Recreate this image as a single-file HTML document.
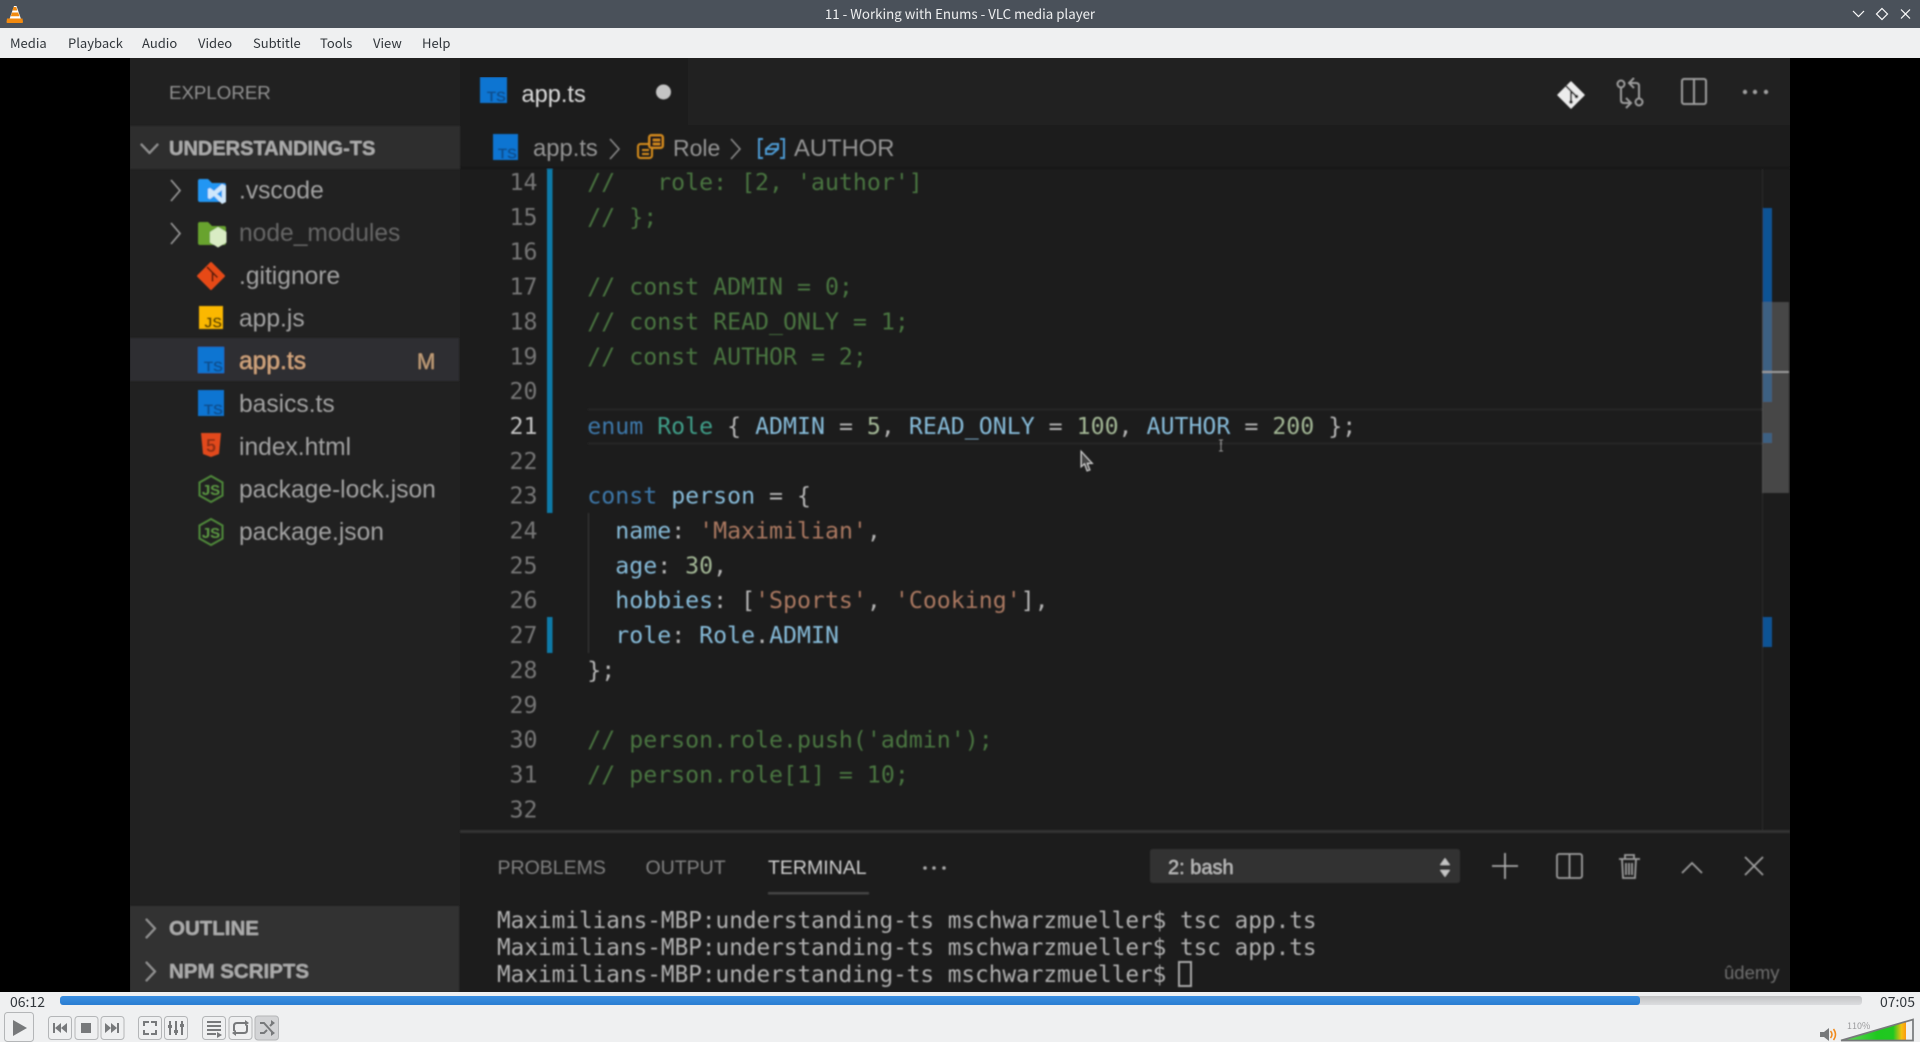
<!DOCTYPE html>
<html><head><meta charset="utf-8"><title>11 - Working with Enums - VLC media player</title>
<style>
html,body{margin:0;padding:0;background:#000;width:1920px;height:1042px;overflow:hidden}
svg{position:absolute;left:0;top:0;display:block}
text{white-space:pre}
.ui{font-family:"Noto Sans CJK JP","Liberation Sans",sans-serif;font-size:13px;fill:#31363b}
.s{font-family:"Liberation Sans",sans-serif}
.f{font-size:24.6px;fill:#a2a2a2}
.b{font-weight:bold;fill:#adadad}
.m{font-family:"DejaVu Sans Mono",monospace;font-size:23.22px}
.n{fill:#767676;text-anchor:end}
.c{fill:#4a7540}.k{fill:#3c78aa}.y{fill:#3f9f89}.v{fill:#86bbd9}.d{fill:#a3b795}.r{fill:#aa7861}.p{fill:#b5b5b5}
.l{fill:none;stroke:#989898;stroke-width:1.700}
.btn{fill:#eff0f1;stroke:#b4b6b8;stroke-width:1}
.ic{fill:#77797b}
.tst{font-family:"Liberation Sans",sans-serif;font-size:15px;font-weight:bold;fill:#0a4f90;text-anchor:end}
</style></head><body>
<svg width="1920" height="1042" viewBox="0 0 1920 1042" xmlns="http://www.w3.org/2000/svg">
<defs>
<filter id="bl" x="0" y="0" width="100%" height="100%"><feGaussianBlur stdDeviation="0.75"/></filter>
<linearGradient id="vol" x1="0" x2="1" y1="0" y2="0"><stop offset="0" stop-color="#66d45c"/><stop offset=".55" stop-color="#1fc81f"/><stop offset=".8" stop-color="#20c820"/><stop offset=".93" stop-color="#f5c010"/><stop offset="1" stop-color="#fb9a10"/></linearGradient>
<linearGradient id="trk" x1="0" x2="0" y1="0" y2="1"><stop offset="0" stop-color="#c2c3c5"/><stop offset="1" stop-color="#dcdde0"/></linearGradient>
<linearGradient id="blu" x1="0" x2="0" y1="0" y2="1"><stop offset="0" stop-color="#3a8ee0"/><stop offset="1" stop-color="#2a7dd2"/></linearGradient>
</defs>

<!-- video background -->
<rect width="1920" height="1042" fill="#000"/>
<rect x="130" y="58" width="330" height="934" fill="#212121"/>
<rect x="460" y="58" width="1330" height="934" fill="#1c1c1c"/>
<rect x="688" y="58" width="1102" height="67" fill="#212121"/>
<g filter="url(#bl)">
<rect x="130" y="126" width="330" height="43" fill="#2e2e2e"/>
<rect x="130" y="906" width="329" height="86" fill="#303030"/>
<rect x="130" y="338" width="329" height="43" fill="#2f2f33"/>
<rect x="460" y="167" width="1330" height="2" fill="#171717"/>

<!-- sidebar -->
<text class="s" x="169" y="99" font-size="18.7" fill="#929292">EXPLORER</text>
<path class="l" d="M141 144l8.500 9 8.500-9"/>
<text class="s b" x="169" y="155" font-size="20">UNDERSTANDING-TS</text>

<path class="l" d="M171 180l9 10.500-9 10.500"/>
<path class="l" d="M171 223l9 10.500-9 10.500"/>
<!-- vscode folder -->
<path d="M198 181a2 2 0 0 1 2-2h8l4 4h12a2 2 0 0 1 2 2v15a2 2 0 0 1-2 2h-24a2 2 0 0 1-2-2z" fill="#2196f3"/>
<path d="M222 184l4 2v16l-4 2-8-8-4 3-2-1v-9l2-1 4 3z" fill="#cfe7fb"/><path d="M222 190l-5 4 5 4z" fill="#2196f3"/>
<text class="s f" x="239" y="198.500">.vscode</text>
<!-- node folder -->
<path d="M198 224a2 2 0 0 1 2-2h8l4 4h12a2 2 0 0 1 2 2v15a2 2 0 0 1-2 2h-24a2 2 0 0 1-2-2z" fill="#67a32e"/>
<path d="M218 227l8.500 5v10.500l-8.500 5-8-5v-10.500z" fill="#d9ecc4"/>
<text class="s f" x="239" y="241" style="fill:#666">node_modules</text>
<!-- git -->
<path d="M211 263l13 13-13 13-13-13z" fill="#e64a19" stroke="#e64a19" stroke-width="2" stroke-linejoin="round"/>
<path d="M207 267l5.500 5.500v9M212.500 272.500l5 5" stroke="#5d1c08" stroke-width="1.800" fill="none"/>
<text class="s f" x="239" y="284">.gitignore</text>
<!-- js -->
<rect x="199" y="306" width="24" height="23" fill="#fbb800"/>
<text class="tst" x="222" y="327.500" style="font-size:14.500px;fill:#5c4500">JS</text>
<text class="s f" x="239" y="326.500">app.js</text>
<!-- ts -->
<rect x="198" y="347" width="26" height="26" fill="#0a74d2"/>
<text class="tst" x="223" y="371.500">TS</text>
<text class="s f" x="239" y="369" style="fill:#d6a880">app.ts</text>
<text class="s" x="417" y="369" font-size="22" fill="#c4a07a">M</text>
<rect x="198" y="390" width="26" height="26" fill="#0a74d2"/>
<text class="tst" x="223" y="414.500">TS</text>
<text class="s f" x="239" y="412">basics.ts</text>
<!-- html5 -->
<path d="M201 433h20l-2 21-8 3-8-3z" fill="#e24a1c"/>
<text class="s" x="211" y="452" font-size="18" font-weight="bold" fill="#8e2f14" text-anchor="middle">5</text>
<text class="s f" x="239" y="455">index.html</text>
<!-- node hex -->
<path d="M211 476l11.500 6.500v13l-11.500 6.500-11.500-6.500v-13z" fill="none" stroke="#4f8a3a" stroke-width="2"/>
<text class="s" x="211" y="495" font-size="15" fill="#5c9a42" text-anchor="middle" font-weight="bold">JS</text>
<text class="s f" x="239" y="497.500">package-lock.json</text>
<path d="M211 519l11.500 6.500v13l-11.500 6.500-11.500-6.500v-13z" fill="none" stroke="#4f8a3a" stroke-width="2"/>
<text class="s" x="211" y="538" font-size="15" fill="#5c9a42" text-anchor="middle" font-weight="bold">JS</text>
<text class="s f" x="239" y="540">package.json</text>

<path class="l" d="M146 919l9 9.500-9 9.500"/>
<text class="s b" x="169" y="935" font-size="20.500">OUTLINE</text>
<path class="l" d="M146 962l9 9.500-9 9.500"/>
<text class="s b" x="169" y="978" font-size="20.500">NPM SCRIPTS</text>

<!-- tab -->
<rect x="480" y="77" width="27" height="26" fill="#0a74d2"/>
<text class="tst" x="506" y="101.500">TS</text>
<text class="s" x="521.500" y="102" font-size="23.600" fill="#dcdcdc">app.ts</text>
<circle cx="663.500" cy="92" r="7.500" fill="#c4c4c4"/>

<!-- right toolbar -->
<path d="M1571 82l13 13-13 13-13-13z" fill="#ececec" stroke="#ececec" stroke-width="1.500" stroke-linejoin="round"/>
<path d="M1566 86l5 5v11M1571 91l5.500 5.500" stroke="#212121" stroke-width="1.800" fill="none"/><circle cx="1571" cy="102" r="1.800" fill="#212121"/><circle cx="1576.500" cy="96.500" r="1.800" fill="#212121"/>
<g fill="none" stroke="#9d9d9d" stroke-width="2">
<circle cx="1621" cy="84" r="3.500"/><circle cx="1639" cy="102" r="3.500"/>
<path d="M1621 88v12q0 3 3 3h6M1626 98l5 5-5 5"/>
<path d="M1639 98v-12q0-3-3-3h-6M1634 88l-5-5 5-5"/>
<rect x="1682" y="79" width="24" height="25" rx="2"/><path d="M1694 79v25"/>
</g>
<circle cx="1745" cy="92" r="2.200" fill="#a0a0a0"/><circle cx="1755" cy="92" r="2.200" fill="#a0a0a0"/><circle cx="1766" cy="92" r="2.200" fill="#a0a0a0"/>

<!-- breadcrumb -->
<rect x="493" y="134" width="25" height="26" fill="#0a74d2"/>
<text class="tst" x="517" y="158.500">TS</text>
<text class="s" x="533" y="156" font-size="23.800" fill="#949494">app.ts</text>
<path d="M610 139l9 10-9 10" fill="none" stroke="#8a8a8a" stroke-width="1.600"/>
<g fill="none" stroke="#d98e1f" stroke-width="2"><rect x="638" y="144" width="14" height="14" rx="2.500"/><rect x="649" y="135" width="14" height="13" rx="2.500" fill="#1c1c1c"/><path d="M642 150h7M642 154h7M653 140h7M653 144h7"/></g>
<text class="s" x="673" y="156" font-size="23" fill="#949494">Role</text>
<path d="M731 139l9 10-9 10" fill="none" stroke="#8a8a8a" stroke-width="1.600"/>
<g fill="none" stroke="#4d9bd4" stroke-width="2"><path d="M763 139h-4v19h4M780 139h4v19h-4"/><path d="M766 149l6-5h6v5l-6 5h-6zM766 149h12"/></g>
<text class="s" x="794" y="156" font-size="23.800" fill="#949494">AUTHOR</text>

<!-- gutter -->
<rect x="547" y="169" width="5.500" height="344" fill="#0c7aa8"/>
<rect x="547" y="617" width="5.500" height="36" fill="#0c7aa8"/>
<rect x="588" y="513" width="1" height="140" fill="#3a3a3a"/>
<path d="M588 409.500H1762M588 443.500H1762" stroke="#282828" stroke-width="2" fill="none"/>

<!-- line numbers -->
<g class="m">
<text class="n" x="537.500" y="190">14</text>
<text class="n" x="537.500" y="224.850">15</text>
<text class="n" x="537.500" y="259.700">16</text>
<text class="n" x="537.500" y="294.500">17</text>
<text class="n" x="537.500" y="329.400">18</text>
<text class="n" x="537.500" y="364.250">19</text>
<text class="n" x="537.500" y="399.100">20</text>
<text class="n" x="537.500" y="433.950" style="fill:#c2c2c2">21</text>
<text class="n" x="537.500" y="468.800">22</text>
<text class="n" x="537.500" y="503.650">23</text>
<text class="n" x="537.500" y="538.500">24</text>
<text class="n" x="537.500" y="573.350">25</text>
<text class="n" x="537.500" y="608.200">26</text>
<text class="n" x="537.500" y="643.050">27</text>
<text class="n" x="537.500" y="677.900">28</text>
<text class="n" x="537.500" y="712.750">29</text>
<text class="n" x="537.500" y="747.600">30</text>
<text class="n" x="537.500" y="782.450">31</text>
<text class="n" x="537.500" y="817.300">32</text>

<!-- code -->
<text class="c" x="587.300" y="190">//   role: [2, 'author']</text>
<text class="c" x="587.300" y="224.850">// };</text>
<text class="c" x="587.300" y="294.500">// const ADMIN = 0;</text>
<text class="c" x="587.300" y="329.400">// const READ_ONLY = 1;</text>
<text class="c" x="587.300" y="364.250">// const AUTHOR = 2;</text>
<text x="587.300" y="433.950" class="p"><tspan class="k">enum</tspan> <tspan class="y">Role</tspan> { <tspan class="v">ADMIN</tspan> = <tspan class="d">5</tspan>, <tspan class="v">READ_ONLY</tspan> = <tspan class="d">100</tspan>, <tspan class="v">AUTHOR</tspan> = <tspan class="d">200</tspan> };</text>
<text x="587.300" y="503.650" class="p"><tspan class="k">const</tspan> <tspan class="v">person</tspan> = {</text>
<text x="587.300" y="538.500" class="p">  <tspan class="v">name</tspan>: <tspan class="r">'Maximilian'</tspan>,</text>
<text x="587.300" y="573.350" class="p">  <tspan class="v">age</tspan>: <tspan class="d">30</tspan>,</text>
<text x="587.300" y="608.200" class="p">  <tspan class="v">hobbies</tspan>: [<tspan class="r">'Sports'</tspan>, <tspan class="r">'Cooking'</tspan>],</text>
<text x="587.300" y="643.050" class="p">  <tspan class="v">role</tspan>: <tspan class="v">Role</tspan>.<tspan class="v">ADMIN</tspan></text>
<text x="587.300" y="677.900" class="p">};</text>
<text class="c" x="587.300" y="747.600">// person.role.push('admin');</text>
<text class="c" x="587.300" y="782.450">// person.role[1] = 10;</text>
</g>

<!-- overview ruler -->
<rect x="1762" y="169" width="1" height="662" fill="#2a2a2a"/>
<rect x="1763" y="208" width="9" height="194" fill="#0a5294"/>
<rect x="1763" y="433" width="9" height="10" fill="#0a5294"/>
<rect x="1763" y="617" width="9" height="30" fill="#0a5294"/>
<rect x="1762" y="302" width="27" height="191" fill="#707070" fill-opacity=".5"/>
<rect x="1762" y="371" width="27" height="2" fill="#9a9a9a"/>

<!-- panel -->
<rect x="460" y="830" width="1330" height="3" fill="#323232"/>
<text class="s" x="497.500" y="874" font-size="19.500" fill="#808080">PROBLEMS</text>
<text class="s" x="645.500" y="874" font-size="19.500" fill="#808080">OUTPUT</text>
<text class="s" x="768" y="874" font-size="19.500" fill="#cdcdcd">TERMINAL</text>
<rect x="768" y="892" width="101" height="2.500" fill="#444"/>
<circle cx="925" cy="868" r="1.800" fill="#aaa"/><circle cx="934" cy="868" r="1.800" fill="#aaa"/><circle cx="944" cy="868" r="1.800" fill="#aaa"/>
<rect x="1150" y="849" width="310" height="34" rx="3" fill="#333"/>
<text class="s" x="1168" y="874" font-size="20" fill="#c0c0c0">2: bash</text>
<path d="M1445 858l5 7h-10zM1445 877l5-7h-10z" fill="#c4c4c4"/>
<path d="M1505 853v26M1492 866h26" stroke="#a8a8a8" stroke-width="1.800" fill="none"/>
<g fill="none" stroke="#9d9d9d" stroke-width="1.800">
<rect x="1557" y="854" width="25" height="24" rx="2"/><path d="M1569.500 854v24"/>
<path d="M1619 859h21M1625 859v-4h9v4M1622 859l1 19h12l1-19M1626 863v12M1629 863v12M1632 863v12"/>
<path d="M1682 873l10-10 10 10"/>
<path d="M1745 857l18 18M1763 857l-18 18"/>
</g>
<g class="m" style="font-size:22.700px;fill:#b0b0b0">
<text x="497" y="928">Maximilians-MBP:understanding-ts mschwarzmueller$ tsc app.ts</text>
<text x="497" y="955">Maximilians-MBP:understanding-ts mschwarzmueller$ tsc app.ts</text>
<text x="497" y="982">Maximilians-MBP:understanding-ts mschwarzmueller$</text>
</g>
<rect x="1179" y="962" width="12" height="24" fill="none" stroke="#a8a8a8" stroke-width="2"/>
<text class="s" x="1724" y="979" font-size="18.500" fill="#6e6e6e">ûdemy</text>

<!-- mouse pointers -->
<path d="M1081 451v16l3.500-3 2.500 7 3-1-2.500-6.500h5z" fill="#444" stroke="#ddd" stroke-width="1"/>
<path d="M1219 440h4M1221 440v11M1219 451h4" stroke="#999" stroke-width="1" fill="none"/>
</g>

<!-- title bar -->
<rect width="1920" height="28" fill="#4a515a"/>
<path d="M14 6l2.500 0 4.500 13h-11.500z" fill="#fff"/>
<path d="M13.500 7h2.800l1 3.500h-4.800zM12 12.500h6.200l1.200 3.800h-8.600z" fill="#f28a10"/>
<path d="M7 18.500h15.500l.5 3.500q0 1-1 1h-14.500q-1 0-1-1z" fill="#f28a10"/>
<text x="960" y="19" text-anchor="middle" style="font-family:'Noto Sans CJK JP','Liberation Sans',sans-serif;font-size:13.300px;fill:#eff0f1">11 - Working with Enums - VLC media player</text>
<path d="M1853 11l5.500 5.500 5.500-5.500" fill="none" stroke="#fcfcfc" stroke-width="1.200"/>
<path d="M1882 8.500l5.500 5.500-5.500 5.500-5.500-5.500z" fill="none" stroke="#fcfcfc" stroke-width="1.200"/>
<path d="M1901 9.500l9 9M1910 9.500l-9 9" fill="none" stroke="#fcfcfc" stroke-width="1.200"/>

<!-- menu -->
<rect y="28" width="1920" height="30" fill="#eff0f1"/>
<g class="ui">
<text class="ui" x="10" y="48">Media</text>
<text class="ui" x="68" y="48">Playback</text>
<text class="ui" x="142" y="48">Audio</text>
<text class="ui" x="198" y="48">Video</text>
<text class="ui" x="253" y="48">Subtitle</text>
<text class="ui" x="320" y="48">Tools</text>
<text class="ui" x="373" y="48">View</text>
<text class="ui" x="422" y="48">Help</text>
</g>

<!-- controls -->
<rect y="992" width="1920" height="50" fill="#eff0f1"/>
<text class="ui" x="10" y="1007" style="font-size:14px">06:12</text>
<text class="ui" x="1880" y="1007" style="font-size:14px">07:05</text>
<rect x="60" y="996" width="1802" height="9" rx="3" fill="url(#trk)"/>
<rect x="60" y="996" width="1580" height="9" rx="3" fill="url(#blu)"/>

<rect class="btn" x="4.500" y="1012.500" width="29" height="29" rx="3"/>
<path class="ic" d="M13 1020l14 8-14 8z"/>
<rect class="btn" x="48.500" y="1016.500" width="23" height="23" rx="3"/>
<path class="ic" d="M53 1023h2v10h-2zM55 1028l6-5v10zM61 1028l6-5v10z"/>
<rect class="btn" x="75" y="1016.500" width="23" height="23" rx="3"/>
<rect class="ic" x="81" y="1023" width="10" height="10"/>
<rect class="btn" x="101" y="1016.500" width="23" height="23" rx="3"/>
<path class="ic" d="M105 1023l6 5-6 5zM111 1023l6 5-6 5zM117 1023h2v10h-2z"/>
<rect class="btn" x="138.500" y="1016.500" width="23" height="23" rx="3"/>
<path d="M144 1026v-4h5M151 1022h5v4M156 1030v4h-5M149 1034h-5v-4" fill="none" stroke="#77797b" stroke-width="2"/>
<rect class="btn" x="164.500" y="1016.500" width="23" height="23" rx="3"/>
<path d="M170 1021v14M176 1021v14M182 1021v14" stroke="#77797b" stroke-width="2" fill="none"/><path class="ic" d="M168 1025h4v3h-4zM174 1030h4v3h-4zM180 1024h4v3h-4z"/>
<rect class="btn" x="202.500" y="1016.500" width="23" height="23" rx="3"/>
<path d="M207 1022h14M207 1026h14M207 1030h14M207 1034h9" stroke="#77797b" stroke-width="2" fill="none"/><path class="ic" d="M217 1032l5 3-5 3z"/>
<rect class="btn" x="229" y="1016.500" width="23" height="23" rx="3"/>
<path d="M234 1031v-5q0-3 3-3h10M247 1025v5q0 3-3 3h-10" fill="none" stroke="#77797b" stroke-width="2"/><path class="ic" d="M245 1020l4 3-4 3zM236 1030l-4 3 4 3z"/>
<rect x="255" y="1016" width="23.500" height="24" rx="3" fill="#d3d4d6" stroke="#b4b6b8"/>
<path d="M260 1023h4l9 10M260 1033h4l3-3M270 1026l3-3" fill="none" stroke="#77797b" stroke-width="2"/><path class="ic" d="M271 1020l4 3-4 3zM271 1030l4 3-4 3z"/>

<!-- volume -->
<path d="M1820 1032h4l5-4v13l-5-4h-4z" fill="#77797b"/>
<path d="M1830.500 1031q3 3.500 0 7M1833.500 1029q4 5.500 0 11" fill="none" stroke="#f08a1c" stroke-width="1.500"/>
<path d="M1842 1040l64-19v19z" fill="url(#vol)"/>
<path d="M1841 1040.500l72-21v21z" fill="none" stroke="#77797b" stroke-width="1.700"/>
<text x="1847" y="1029" style="font-family:'Noto Sans CJK JP','Liberation Sans',sans-serif;font-size:9px;fill:#9a9b9d">110%</text>
</svg>
</body></html>
